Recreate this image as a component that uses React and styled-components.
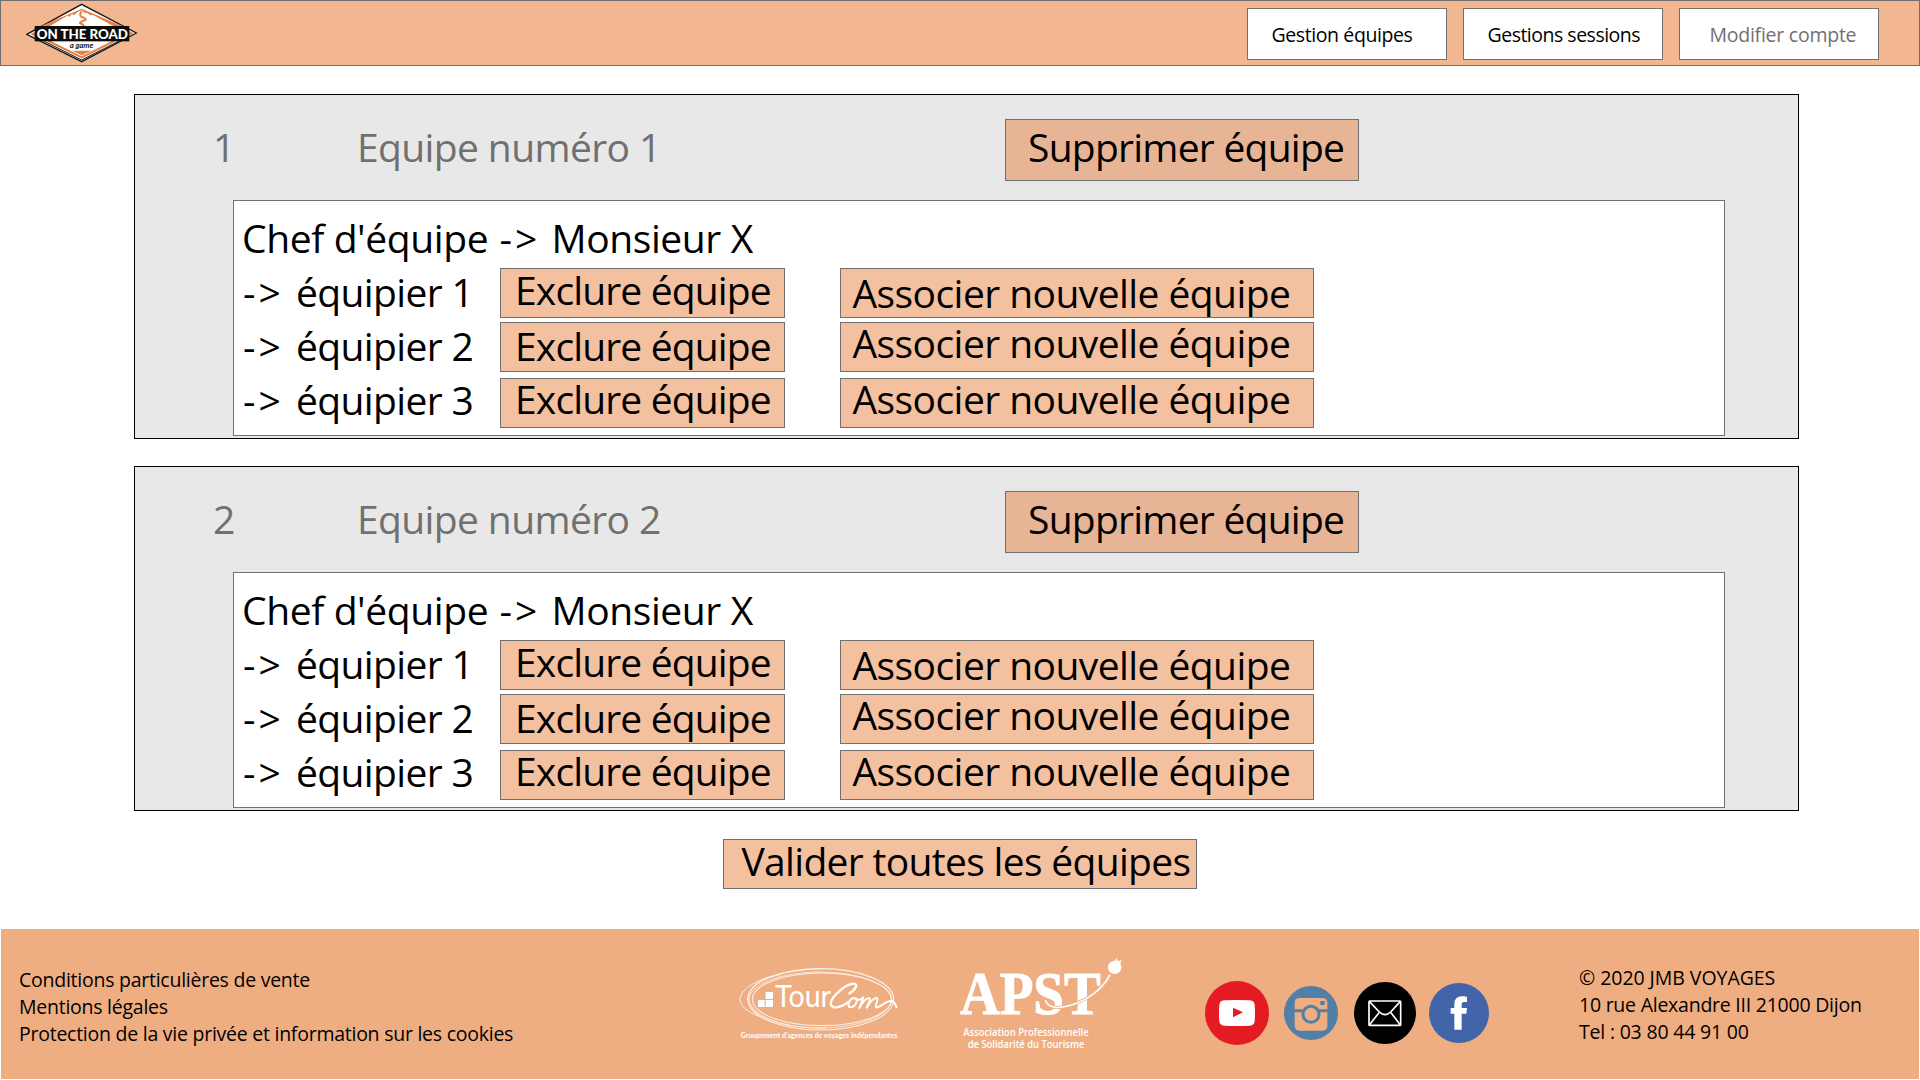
import React from 'react';
import styled, { createGlobalStyle } from 'styled-components';

const GlobalStyle = createGlobalStyle`
  * { box-sizing: border-box; }
  body { margin: 0; background: #fff; }
`;

const Page = styled.div`
  width: 1920px;
  height: 1080px;
  display: flex;
  flex-direction: column;
  overflow: hidden;
  background: #fff;
  color: #000;
  font-family: 'Open Sans', 'Noto Sans', sans-serif;
  font-size: 39px;
  letter-spacing: -0.62px;
  white-space: nowrap;
`;

const Header = styled.header`
  display: flex;
  flex: none;
  justify-content: space-between;
  align-items: flex-start;
  height: 66px;
  padding: 2px 40px 0 25px;
  background: #f2b691;
  border: 1px solid #707070;
`;

const Nav = styled.nav`
  display: flex;
  gap: 16px;
  padding-top: 5px;
`;

const NavButton = styled.button`
  width: 200px;
  height: 52px;
  padding: 0 0 0 ${(p) => p.$indent || 23.5}px;
  display: flex;
  align-items: flex-start;
  border: 1px solid #707070;
  background: #fff;
  color: ${(p) => (p.$muted ? '#707070' : '#000')};
  font: 400 19.5px/52px 'Open Sans', 'Noto Sans', sans-serif;
  letter-spacing: ${(p) => p.$tracking}px;
  text-align: left;
`;

const Main = styled.main`
  display: flex;
  flex: none;
  flex-direction: column;
  align-items: flex-start;
  gap: 27px;
  height: 863px;
  padding: 28px 0 0 134px;
`;

const Card = styled.section`
  width: 1665px;
  height: 345px;
  background: #e8e8e8;
  border: 1px solid #000;
`;

const CardHeader = styled.div`
  display: flex;
  align-items: flex-start;
  height: 105px;
  padding: 24px 0 0 78px;
  color: #707070;
  line-height: 56px;
`;

const TeamNumber = styled.span`
  width: 144px;
`;

const TeamName = styled.span`
  width: 648px;
`;

const ActionButton = styled.button`
  flex: none;
  width: ${(p) => p.$width}px;
  height: ${(p) => p.$height || 50}px;
  margin-top: ${(p) => p.$drop || 0}px;
  padding: 0 0 0 ${(p) => p.$indent}px;
  display: flex;
  align-items: flex-start;
  border: 1px solid #707070;
  background: ${(p) => (p.$dark ? '#e7b595' : '#f3c1a0')};
  color: #000;
  font: 400 39px 'Open Sans', 'Noto Sans', sans-serif;
  line-height: ${(p) => p.$leading}px;
  letter-spacing: ${(p) => p.$tracking}px;
  text-align: left;
`;

const Members = styled.div`
  width: 1492px;
  height: 236px;
  margin-left: 98px;
  padding-top: 10px;
  background: #fff;
  border: 1px solid #707070;
`;

const Leader = styled.div`
  height: 54px;
  padding-left: 8px;
  line-height: 54px;
  letter-spacing: -0.4px;
`;

const Member = styled.div`
  display: flex;
  align-items: flex-start;
  height: 54px;
`;

const MemberName = styled.div`
  width: 266px;
  padding-left: 9px;
  line-height: 54px;
`;

const Arrow = styled.span`
  letter-spacing: 3px;
  margin-left: ${(p) => p.$before || 0}px;
  margin-right: ${(p) => p.$after || 0}px;
`;

const Gap = styled.span`
  width: 55px;
`;

const ValidateRow = styled.div`
  margin: 1px 0 0 589px;
`;

const Footer = styled.footer`
  display: flex;
  flex: none;
  align-items: flex-start;
  width: 1918px;
  height: 150px;
  margin-left: 1px;
  padding-left: 18px;
  background: #efae82;
  font-size: 19.5px;
  line-height: 27px;
  letter-spacing: -0.25px;
`;

const Links = styled.div`
  display: flex;
  flex-direction: column;
  width: 719px;
  padding-top: 37px;
`;

const Partner = styled.div`
  width: ${(p) => p.$width}px;
  padding-top: ${(p) => p.$top}px;
  svg { display: block; }
`;

const Socials = styled.div`
  display: flex;
  align-items: center;
  height: 168px;
  width: 374px;
`;

const Round = styled.svg`
  display: block;
  flex: none;
  width: ${(p) => p.$size}px;
  height: ${(p) => p.$size}px;
  margin-right: ${(p) => p.$after || 0}px;
`;

const Address = styled.div`
  display: flex;
  flex-direction: column;
  padding-top: 35px;
`;

const AddressLine = styled.span`
  letter-spacing: ${(p) => p.$tracking}px;
`;

const Brand = () => (
  <svg width="112" height="60" viewBox="79 10 336 180" fill="none">
    <path d="M79 104 L246 12 L413 100 L246 188Z" fill="#fff" />
    <path d="M81 104 L246 14 L410 100 L246 186Z" stroke="#161616" strokeWidth="4" />
    <path d="M112 84 L246 27 L380 84Z" fill="#e9813d" />
    <path d="M142 84 L203 48 L210 51 L216 44 L224 46 L233 38 L246 31 L256 40 L262 39 L272 47 L280 46 L350 84Z" fill="#fff" />
    <path d="M246 34 Q237 48 246 52 Q260 55 258 61 Q240 66 241 70 Q255 76 252 82" stroke="#e9813d" strokeWidth="6" />
    <path d="M92 103 L106 96 V112Z M402 100 L388 94 V109Z" fill="#e9813d" />
    <path d="M132 124 L246 181 L358 124" stroke="#161616" strokeWidth="3" />
    <path d="M146 124 L246 173 L344 124" stroke="#e9813d" strokeWidth="6" />
    <path d="M218 153 H276 L246 167Z" fill="#e9813d" />
    <rect x="105" y="79" width="284" height="46" fill="#0c0c0c" />
    <text x="111" y="117" fill="#fff" fontFamily="Lato, sans-serif" fontWeight="900" fontSize="42" letterSpacing="0" textLength="274" lengthAdjust="spacingAndGlyphs">ON THE ROAD</text>
    <text x="210" y="144" fill="#161616" fontFamily="Lato, sans-serif" fontStyle="italic" fontWeight="700" fontSize="25" letterSpacing="0" textLength="71" lengthAdjust="spacingAndGlyphs">a game</text>
  </svg>
);

const TourCom = () => (
  <svg width="162" height="76" viewBox="54 78 486 228" fill="none" stroke="#fff">
    <g opacity="0.8">
      <ellipse cx="302" cy="178" rx="219" ry="92" strokeWidth="3.5" />
      <ellipse cx="306" cy="178" rx="209" ry="79" strokeWidth="3.5" />
      <ellipse cx="300" cy="180" rx="214" ry="84" strokeWidth="2.5" />
      <path d="M302 86 C160 92 62 134 60 177 C60 200 84 216 120 230" strokeWidth="3" />
      <path d="M180 104 C110 116 78 150 90 190 C112 240 220 268 318 264" strokeWidth="2.5" />
    </g>
    <path d="M114 180 H134 V201 H114Z M137 180 H159 V201 H137Z M137 156 H159 V177 H137Z" fill="#fff" stroke="none" />
    <text x="165" y="202" fill="#fff" stroke="none" fontFamily="Lato, sans-serif" fontSize="90" fontWeight="400" letterSpacing="0" textLength="168" lengthAdjust="spacingAndGlyphs">Tour</text>
    <path d="M388 160 C404 152 416 134 403 131 C378 130 334 170 332 190 C334 212 366 200 388 184" strokeWidth="7" strokeLinecap="round" />
    <path d="M404 174 C388 174 378 202 392 202 C406 202 418 176 404 174 C412 184 424 178 430 172 L418 204 C428 186 440 174 448 174 C454 178 444 192 440 203 C450 186 462 174 470 174 C478 178 464 196 468 202 C480 204 494 184 512 183 C526 183 524 194 530 201" strokeWidth="6" strokeLinecap="round" strokeLinejoin="round" />
    <text x="62" y="293" fill="#fff" stroke="none" fontFamily="Lato, sans-serif" fontWeight="700" fontSize="20" letterSpacing="0" textLength="470" lengthAdjust="spacingAndGlyphs">Groupement d'agences de voyages indépendantes</text>
  </svg>
);

const Apst = () => (
  <svg width="168" height="94" viewBox="714 48 504 282" fill="none">
    <text x="720" y="223" fill="#fff" stroke="#fff" strokeWidth="3" fontFamily="'Liberation Serif', serif" fontWeight="700" fontSize="186" letterSpacing="0" textLength="422" lengthAdjust="spacingAndGlyphs">APST</text>
    <path d="M976 180 C984 204 1012 206 1044 198 C1096 184 1146 152 1170 104" stroke="#efae82" strokeWidth="9" />
    <path d="M976 180 C984 204 1012 206 1044 198 C1096 184 1146 152 1170 104" stroke="#fff" strokeWidth="5" />
    <circle cx="1184" cy="82" r="20" fill="#fff" />
    <path d="M1184 64 L1190 55 L1194 64 L1205 60 L1200 72Z" fill="#fff" />
    <g fill="#fff" fontFamily="'Open Sans', sans-serif" fontWeight="600" fontSize="31" letterSpacing="0">
      <text x="730" y="288" textLength="376" lengthAdjust="spacingAndGlyphs">Association Professionnelle</text>
      <text x="743" y="323" textLength="350" lengthAdjust="spacingAndGlyphs">de Solidarité du Tourisme</text>
    </g>
  </svg>
);

const SocialIcons = () => (
  <Socials>
    <Round $size={64} $after={15} viewBox="75 93 192 192">
      <circle cx="171" cy="189" r="96" fill="#e41b22" />
      <path d="M132 151 Q171 149 210 151 Q223 152 224 165 Q226 189 224 213 Q223 226 210 227 Q171 229 132 227 Q119 226 118 213 Q116 189 118 165 Q119 152 132 151Z" fill="#fff" />
      <path d="M159 173 L189 187 L159 202Z" fill="#e41b22" />
    </Round>
    <Round $size={54} $after={16} viewBox="312 108 162 162">
      <circle cx="393" cy="189" r="81" fill="#5280a5" />
      <rect x="344" y="144" width="98" height="98" rx="14" fill="#efae82" />
      <path d="M343 178 H443 V187 H343Z M421 153 H434 V165 H421Z" fill="#5280a5" />
      <circle cx="393" cy="193" r="24" fill="#efae82" stroke="#5280a5" strokeWidth="9" />
    </Round>
    <Round $size={62} $after={13} viewBox="522 96 186 186">
      <circle cx="615" cy="189" r="93" fill="#000" />
      <g fill="none" stroke="#fff" strokeWidth="5" strokeLinejoin="round">
        <rect x="567" y="153" width="95" height="73" rx="2" />
        <path d="M568 154 L598 186 Q615 202 632 186 L661 154 M568 225 L597 188 M661 225 L633 188" />
      </g>
    </Round>
    <Round $size={60} viewBox="747 99 180 180">
      <circle cx="837" cy="189" r="90" fill="#4265a9" />
      <path d="M823 239 V191 H812 V174 H823 V163 Q823 139 846 139 Q854 138 861 140 V156 H852 Q845 156 845 164 V174 H861 L859 191 H845 V239Z" fill="#fff" />
    </Round>
  </Socials>
);

const members = [
  { name: 'équipier 1', drop: 3, excludeLeading: 42, assignLeading: 48 },
  { name: 'équipier 2', drop: 3, excludeLeading: 46, assignLeading: 40 },
  { name: 'équipier 3', drop: 5, excludeLeading: 40, assignLeading: 40 },
];

const Team = ({ number }) => (
  <Card>
    <CardHeader>
      <TeamNumber>{number}</TeamNumber>
      <TeamName>Equipe numéro {number}</TeamName>
      <ActionButton $dark $width={354} $height={62} $indent={22} $leading={54} $tracking={-0.75}>
        Supprimer équipe
      </ActionButton>
    </CardHeader>
    <Members>
      <Leader>
        Chef d'équipe <Arrow $before={1.5} $after={1.5}>-&gt;</Arrow> Monsieur X
      </Leader>
      {members.map((m) => (
        <Member key={m.name}>
          <MemberName>
            <Arrow $after={2.5}>-&gt;</Arrow> {m.name}
          </MemberName>
          <ActionButton $width={285} $drop={m.drop} $indent={14} $leading={m.excludeLeading} $tracking={-0.85}>
            Exclure équipe
          </ActionButton>
          <Gap />
          <ActionButton $width={474} $drop={m.drop} $indent={11.5} $leading={m.assignLeading} $tracking={-0.57}>
            Associer nouvelle équipe
          </ActionButton>
        </Member>
      ))}
    </Members>
  </Card>
);

export default function App() {
  return (
    <Page>
      <GlobalStyle />
      <Header>
        <Brand />
        <Nav>
          <NavButton $tracking={-0.4}>Gestion équipes</NavButton>
          <NavButton $tracking={-0.5}>Gestions sessions</NavButton>
          <NavButton $muted $indent={29.5} $tracking={-0.25}>Modifier compte</NavButton>
        </Nav>
      </Header>
      <Main>
        <Team number={1} />
        <Team number={2} />
        <ValidateRow>
          <ActionButton $width={474} $indent={17.5} $leading={42} $tracking={-0.68}>
            Valider toutes les équipes
          </ActionButton>
        </ValidateRow>
      </Main>
      <Footer>
        <Links>
          <span>Conditions particulières de vente</span>
          <span>Mentions légales</span>
          <span>Protection de la vie privée et information sur les cookies</span>
        </Links>
        <Partner $width={220} $top={37}><TourCom /></Partner>
        <Partner $width={247} $top={27}><Apst /></Partner>
        <SocialIcons />
        <Address>
          <AddressLine $tracking={-0.05}>© 2020 JMB VOYAGES</AddressLine>
          <AddressLine $tracking={-0.24}>10 rue Alexandre III 21000 Dijon</AddressLine>
          <AddressLine $tracking={-0.2}>Tel : 03 80 44 91 00</AddressLine>
        </Address>
      </Footer>
    </Page>
  );
}
